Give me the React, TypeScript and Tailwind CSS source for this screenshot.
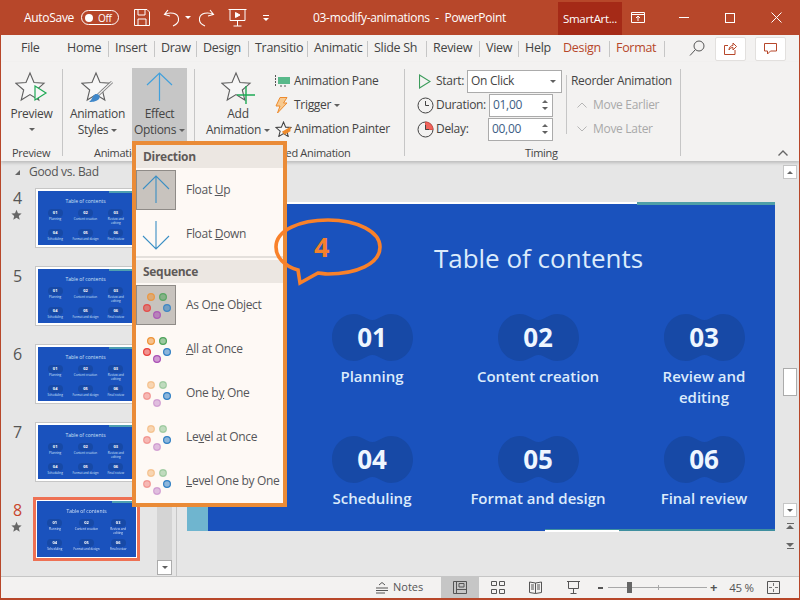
import type { ReactNode } from "react";

const tabs = [
  { label: "Home", w: "w-[48px]" },
  { label: "Insert", w: "w-[46px]" },
  { label: "Draw", w: "w-[42px]" },
  { label: "Design", w: "w-[52px]" },
  { label: "Transitio", w: "w-[59px]" },
  { label: "Animatic", w: "w-[60px]", active: true },
  { label: "Slide Sh", w: "w-[59px]" },
  { label: "Review", w: "w-[53px]" },
  { label: "View", w: "w-[39px]" },
  { label: "Help", w: "w-[38px]", plain: true },
  { label: "Design", w: "w-[53px]", red: true },
  { label: "Format", w: "w-[55px]", red: true },
];

const topics = [
  { num: "01", lines: ["Planning"] },
  { num: "02", lines: ["Content creation"] },
  { num: "03", lines: ["Review and", "editing"] },
  { num: "04", lines: ["Scheduling"] },
  { num: "05", lines: ["Format and design"] },
  { num: "06", lines: ["Final review"] },
];

const thumbs = [
  { n: 4, star: true },
  { n: 5 },
  { n: 6 },
  { n: 7 },
  { n: 8, star: true, selected: true },
];

const STAR = "M15 2 L19 11.5 L29 12.3 L21.3 19 L23.8 29 L15 23.6 L6.2 29 L8.7 19 L1 12.3 L11 11.5 Z";

function BigStar({ children }: { children?: ReactNode }) {
  return (
    <svg width="34" height="34" viewBox="0 0 34 34" fill="none">
      <path d={STAR} fill="#f7f7f7" stroke="#5f5f5f" strokeWidth="1.1" />
      {children}
    </svg>
  );
}

function Caret({ className = "" }: { className?: string }) {
  return <span className={`inline-block h-0 w-0 border-x-[3px] border-t-[3px] border-x-transparent border-t-[#606060] ${className}`} />;
}

function Blob({ className }: { className: string }) {
  return (
    <svg className={className} viewBox="0 0 81 47" fill="#1749a6">
      <path d="M22 0 C31 0 34 6 40.5 6 C47 6 50 0 59 0 C72 0 81 11 81 23.5 C81 36 72 47 59 47 C50 47 47 41 40.5 41 C34 41 31 47 22 47 C9 47 0 36 0 23.5 C0 11 9 0 22 0 Z" />
    </svg>
  );
}

function MiniSlide({ faded }: { faded?: boolean }) {
  return (
    <div className={`relative h-full w-full overflow-hidden bg-[#1a52bd] tracking-normal ${faded ? "blur-[0.3px]" : ""}`}>
      <div className="absolute right-0 top-0 h-[2px] w-[24px] bg-[#4f9fb0]" />
      <div className="pt-[7px] text-center text-[5px] leading-[7px] text-[#cfe0f5]">Table of contents</div>
      <div className="mt-[4px] grid grid-cols-3 gap-y-[4px] px-[2px]">
        {topics.map((t) => (
          <div key={t.num} className="flex h-[16px] flex-col items-center">
            <div className="flex h-[8px] w-[15px] items-center justify-center rounded-full bg-[#1749a6] text-[4px] font-bold leading-none text-white">{t.num}</div>
            <div className="text-center text-[3px] leading-[4px] text-[#d8e6f8]">
              {t.lines.map((l) => (
                <div key={l}>{l}</div>
              ))}
            </div>
          </div>
        ))}
      </div>
    </div>
  );
}

function Dots({ level }: { level: "one" | "all" | "seq" }) {
  const dots = [
    { x: 14, y: 11, c: "#ee9336" },
    { x: 26, y: 11, c: "#4ea35a" },
    { x: 10, y: 22, c: "#e8403c" },
    { x: 30, y: 22, c: "#2f7fc4", keep: true },
    { x: 20, y: 29, c: "#a94fb5" },
  ];
  return (
    <svg width="40" height="40" viewBox="0 0 40 40">
      {dots.map((d) => {
        const full = level === "all" || d.keep;
        const op = level === "one" ? 0.85 : full ? 1 : 0.4;
        return (
          <circle
            key={d.c}
            cx={d.x}
            cy={d.y}
            r="3.4"
            fill={d.c}
            fillOpacity={level === "seq" && !d.keep ? 0.35 : 0.55}
            stroke={d.c}
            strokeOpacity={op}
            strokeWidth="1.2"
          />
        );
      })}
    </svg>
  );
}

function Arrow({ down }: { down?: boolean }) {
  return (
    <svg width="38" height="38" viewBox="0 0 38 38" fill="none" stroke="#3b8fc4" strokeWidth="1.1">
      {down ? <path d="M19 6 V34 M6 21 L19 34 L32 21" /> : <path d="M19 5 V32 M6 18 L19 5 L32 18" />}
    </svg>
  );
}

function MenuItem({ icon, active, children }: { icon: ReactNode; active?: boolean; children: ReactNode }) {
  return (
    <div className="flex h-[44px] items-center">
      <div className={`h-[40px] w-[40px] shrink-0 ${active ? "border border-[#8f8b87] bg-[#c8c3be]" : "border border-transparent"}`}>{icon}</div>
      <span className="ml-[10px] whitespace-nowrap text-[12px] text-[#55565a]">{children}</span>
    </div>
  );
}

function MenuHeader({ children }: { children: ReactNode }) {
  return <div className="flex h-[23px] items-center bg-[#ece7e2] pl-[7px] text-[12px] font-bold text-[#5f5a58]">{children}</div>;
}

function EffectMenu() {
  return (
    <div className="absolute left-[131px] top-[141px] z-20 h-[366px] w-[155px] border-[4px] border-[#ea8b37] bg-[#fef9f5]">
      <MenuHeader>Direction</MenuHeader>
      <MenuItem active icon={<Arrow />}>Float <u>U</u>p</MenuItem>
      <MenuItem icon={<Arrow down />}>Float <u>D</u>own</MenuItem>
      <div className="mb-[2px] h-[2px] bg-[#e4e0dc]" />
      <MenuHeader>Sequence</MenuHeader>
      <MenuItem active icon={<Dots level="one" />}>As O<u>n</u>e Object</MenuItem>
      <MenuItem icon={<Dots level="all" />}><u>A</u>ll at Once</MenuItem>
      <MenuItem icon={<Dots level="seq" />}>One b<u>y</u> One</MenuItem>
      <MenuItem icon={<Dots level="seq" />}>Le<u>v</u>el at Once</MenuItem>
      <MenuItem icon={<Dots level="seq" />}><u>L</u>evel One by One</MenuItem>
    </div>
  );
}

function Callout() {
  return (
    <>
      <svg className="absolute left-[269px] top-[214px] z-30" width="118" height="76" viewBox="0 0 118 76" fill="none" stroke="#f9812a" strokeWidth="3.6">
        <path d="M28 56 C14 52 6 43 6 33 C6 16 30 6 58 6 C88 6 110 18 110 33 C110 50 86 60 58 60 C54 60 50 59 48 59 L30 69 Z" />
      </svg>
      <span className="absolute left-[313px] top-[229px] z-30 text-[27px] font-bold leading-[36px] text-[#f4812c]">4</span>
    </>
  );
}

function LargeButton({ icon, lines, caretInline, className = "" }: { icon: ReactNode; lines: string[]; caretInline?: boolean; className?: string }) {
  return (
    <div className={`flex flex-col items-center ${className}`}>
      <div className="flex h-[37px] items-center justify-center">{icon}</div>
      {lines.map((l, i) => (
        <div key={l} className="flex h-[16px] items-center gap-[3px] whitespace-nowrap text-[12px] leading-[16px] text-[#444]">
          {l}
          {caretInline && i === lines.length - 1 && <Caret />}
        </div>
      ))}
      {!caretInline && <Caret className="mt-[6px]" />}
    </div>
  );
}

function RibbonGroup({ w, label, labelClass, children }: { w: string; label: string; labelClass: string; children: ReactNode }) {
  return (
    <div className={`mt-[7px] h-[87px] shrink-0 border-r border-[#c6c6c6] ${w}`}>
      <div className="flex h-[78px]">{children}</div>
      <div className={`h-[12px] whitespace-nowrap text-[11px] leading-[12px] text-[#444] ${labelClass}`}>{label}</div>
    </div>
  );
}

function SmallAction({ icon, label, caret }: { icon: ReactNode; label: string; caret?: boolean }) {
  return (
    <div className="flex h-[24px] items-center">
      <div className="flex w-[19px] shrink-0 items-center">{icon}</div>
      <span className="whitespace-nowrap text-[12px] text-[#444]">{label}</span>
      {caret && <Caret className="ml-[3px]" />}
    </div>
  );
}

function SpinInput({ value, className }: { value: string; className: string }) {
  return (
    <div className={`flex h-[23px] items-center justify-between border border-[#ababab] bg-white pl-[3px] pr-[4px] ${className}`}>
      <span className="text-[12px] text-[#3d5d85]">{value}</span>
      <span className="flex flex-col gap-[4px]">
        <span className="h-0 w-0 border-x-[3px] border-b-[3px] border-x-transparent border-b-[#666]" />
        <Caret />
      </span>
    </div>
  );
}

function Clock({ slice }: { slice?: boolean }) {
  return (
    <svg width="17" height="17" viewBox="0 0 17 17" fill="none" stroke="#444" strokeWidth="1">
      <circle cx="8.5" cy="8.5" r="7.5" />
      {slice && <path d="M8.5 1 A7.5 7.5 0 0 1 16 8.5 H8.5 Z" fill="#f1635b" stroke="#d9534b" />}
      <path d="M8.5 4 V8.5 H12" />
    </svg>
  );
}

function TitleBar() {
  return (
    <div className="flex h-[35px] items-center bg-[#b7472a] text-white">
      <span className="ml-[23px] w-[57px] text-[12px]">AutoSave</span>
      <div className="flex h-[15px] w-[38px] items-center rounded-full border border-white pl-[3px]">
        <span className="h-[8px] w-[8px] rounded-full bg-white" />
        <span className="ml-[5px] text-[10px] leading-none">Off</span>
      </div>
      <svg className="ml-[15px]" width="16" height="17" viewBox="0 0 16 17" fill="none" stroke="white">
        <path d="M.5 .5 H13 L15.5 3 V16.5 H.5 Z M4 .5 V6 H11 V.5 M4 16.5 V10 H12 V16.5" />
      </svg>
      <svg className="ml-[13px]" width="18" height="18" viewBox="0 0 18 18" fill="none" stroke="white" strokeWidth="1.1">
        <path d="M5 1 L1.5 5.5 L7 7 M1.5 5.5 C7 2.5 15 4 15.5 9.5 C16 13 13.5 15.5 10 17" />
      </svg>
      <span className="ml-[4px] h-0 w-0 border-x-[3px] border-t-[3px] border-x-transparent border-t-white" />
      <svg className="ml-[8px]" width="16" height="18" viewBox="0 0 16 18" fill="none" stroke="white" strokeWidth="1.1">
        <path d="M11 1 L14.5 5.5 L9 7 M14.5 5.5 C9 2.5 1 4 .5 9.5 C0 13 2.5 15.5 6 17" />
      </svg>
      <svg className="ml-[13px]" width="19" height="19" viewBox="0 0 19 19" fill="none" stroke="white">
        <path d="M.5 1.5 H18.5 M2 1.5 V12.5 H17 V1.5 M9.5 12.5 V18 M5.5 18 H13.5" />
        <path d="M7.5 4.5 L12 7 L7.5 9.5 Z" fill="white" />
      </svg>
      <div className="ml-[16px] flex flex-col items-center gap-[2px]">
        <span className="h-px w-[6px] bg-white" />
        <span className="h-0 w-0 border-x-[3px] border-t-[3px] border-x-transparent border-t-white" />
      </div>
      <span className="ml-[44px] w-[245px] whitespace-pre text-[12px]">03-modify-animations  -  PowerPoint</span>
      <div className="flex h-[33px] w-[64px] items-center justify-center self-end bg-[#a52a17] text-[11.5px]">SmartArt...</div>
      <svg className="ml-[9px]" width="14" height="11" viewBox="0 0 14 11" fill="none" stroke="white">
        <path d="M.5 .5 H13.5 V10.5 H.5 Z M.5 2.5 H13.5 M7 9 V4 M5 6 L7 4 L9 6" />
      </svg>
      <span className="ml-[34px] h-px w-[10px] bg-white" />
      <span className="ml-[36px] h-[10px] w-[10px] border border-white" />
      <svg className="ml-[36px]" width="11" height="11" viewBox="0 0 11 11" stroke="white">
        <path d="M.5 .5 L10.5 10.5 M10.5 .5 L.5 10.5" />
      </svg>
    </div>
  );
}

function TabRow() {
  return (
    <div className="flex h-[27px] items-center bg-[#f3f2f1] text-[12.5px] text-[#444]">
      <span className="ml-[20px] w-[40px]">File</span>
      {tabs.map((t) => (
        <div key={t.label + t.w} className={`relative flex h-[16px] items-center pl-[6px] ${t.w} ${t.plain ? "" : "border-r border-[#c6c6c6]"}`}>
          <span className={`whitespace-nowrap ${t.active ? "font-medium" : ""} ${t.red ? "text-[#b7472a]" : ""}`}>{t.label}</span>
          {t.active && <span className="absolute left-[5px] top-[21px] h-[2px] w-[50px] bg-[#b7472a]" />}
        </div>
      ))}
      <svg className="ml-[24px]" width="16" height="17" viewBox="0 0 16 17" fill="none" stroke="#555">
        <circle cx="10" cy="6" r="5" />
        <path d="M6.5 9.5 L1 15.5" />
      </svg>
      <div className="ml-[10px] flex h-[24px] w-[31px] items-center justify-center rounded-[2px] border border-[#e2e0de] bg-white">
        <svg width="13" height="13" viewBox="0 0 13 13" fill="none" stroke="#b7472a">
          <path d="M4 3.5 H.5 V12.5 H11 V8 M5 8 C5 5 7 3.5 9 3.5 V1 L12.5 4.5 L9 8 V5.5 C7.5 5.5 6 6 5 8 Z" />
        </svg>
      </div>
      <div className="ml-[9px] flex h-[24px] w-[31px] items-center justify-center rounded-[2px] border border-[#e2e0de] bg-white">
        <svg width="13" height="12" viewBox="0 0 13 12" fill="none" stroke="#b7472a">
          <path d="M.5 .5 H12.5 V8 H6.5 L3.5 11 V8 H.5 Z" />
        </svg>
      </div>
    </div>
  );
}

function Ribbon() {
  return (
    <div className="relative z-10 flex h-[99px] bg-[#f3f2f1] shadow-[0_2px_3px_rgba(0,0,0,0.18)]">
      <RibbonGroup w="w-[62px]" label="Preview" labelClass="pl-[11px]">
        <LargeButton
          className="w-[61px]"
          lines={["Preview"]}
          icon={
            <BigStar>
              <path d="M20 15 L31 22 L20 29 Z" fill="#f7f7f7" stroke="#1eaa55" strokeWidth="1.2" />
            </BigStar>
          }
        />
      </RibbonGroup>
      <RibbonGroup w="w-[132px]" label="Animation" labelClass="pl-[31px]">
        <LargeButton
          className="w-[69px]"
          lines={["Animation", "Styles"]}
          caretInline
          icon={
            <BigStar>
              <path d="M31 11 L17 24" stroke="#777" strokeWidth="3" />
              <path d="M31 11 L17 24" stroke="#eee" strokeWidth="1.4" />
              <path d="M13 24 C17 21 20 25 18 28 C15 31 10 31 8 31 C11 29 11 26 13 24 Z" fill="#3f87c9" />
            </BigStar>
          }
        />
        <div className="-mt-px flex h-[73px] w-[55px] flex-col items-center bg-[#c6c6c6]">
          <div className="flex h-[38px] items-center">
            <svg width="27" height="30" viewBox="0 0 27 30" fill="none" stroke="#41a0dc" strokeWidth="1.2">
              <path d="M13.5 1 V29 M1 13 L13.5 1 L26 13" />
            </svg>
          </div>
          <div className="h-[16px] text-[12px] leading-[16px] text-[#444]">Effect</div>
          <div className="flex h-[16px] items-center gap-[3px] whitespace-nowrap text-[12px] leading-[16px] text-[#444]">
            Options
            <Caret />
          </div>
        </div>
      </RibbonGroup>
      <RibbonGroup w="w-[210px]" label="Advanced Animation" labelClass="pl-[55px]">
        <LargeButton
          className="ml-[4px] w-[78px]"
          lines={["Add", "Animation"]}
          caretInline
          icon={
            <BigStar>
              <path d="M25 15 V33 M16 24 H34" stroke="#1eaa55" strokeWidth="1.4" />
            </BigStar>
          }
        />
        <div className="-mt-px ml-[-2px] flex flex-col pt-[1px]">
          <SmallAction
            label="Animation Pane"
            icon={
              <svg width="16" height="12" viewBox="0 0 16 12" fill="none">
                <path d="M.5 0 V12" stroke="#555" strokeDasharray="2 1" />
                <path d="M3 2 H15 V9 H3 Z" fill="#58b98a" />
                <path d="M5 11 H13" stroke="#555" strokeDasharray="2 2" />
              </svg>
            }
          />
          <SmallAction
            label="Trigger"
            caret
            icon={
              <svg width="13" height="17" viewBox="0 0 13 17" fill="#f7c98f" stroke="#ed8a2c">
                <path d="M5 .5 H12 L8.5 6 H12 L2.5 16 L5 9 H1 Z" />
              </svg>
            }
          />
          <SmallAction
            label="Animation Painter"
            icon={
              <svg width="17" height="16" viewBox="0 0 30 30" fill="none">
                <path d={STAR} fill="#f7f7f7" stroke="#444" strokeWidth="2" />
                <path d="M12 20 L28 11 L28 19 L17 26 Z" fill="#ed8a2c" />
              </svg>
            }
          />
        </div>
      </RibbonGroup>
      <RibbonGroup w="w-[276px]" label="Timing" labelClass="pl-[120px]">
        <div className="ml-[12px] flex w-[148px] flex-col">
          <div className="flex h-[24px] items-center">
            <svg className="ml-[2px] mr-[5px]" width="12" height="15" viewBox="0 0 12 15" fill="none" stroke="#3d9c5c" strokeWidth="1.1">
              <path d="M.5 1 L11 7.5 L.5 14 Z" />
            </svg>
            <span className="w-[31px] text-[12px] text-[#444]">Start:</span>
            <div className="flex h-[23px] w-[95px] items-center justify-between border border-[#ababab] bg-white pl-[3px] pr-[5px] text-[12px] text-[#444]">
              On Click
              <Caret />
            </div>
          </div>
          <div className="flex h-[24px] items-center">
            <span className="mr-[2px] flex"><Clock /></span>
            <span className="w-[53px] text-[12px] text-[#444]">Duration:</span>
            <SpinInput value="01,00" className="w-[64px]" />
          </div>
          <div className="flex h-[24px] items-center">
            <span className="mr-[2px] flex"><Clock slice /></span>
            <span className="w-[52px] text-[12px] text-[#444]">Delay:</span>
            <SpinInput value="00,00" className="w-[65px]" />
          </div>
        </div>
        <div className="my-[6px] ml-[1px] h-[59px] border-l border-[#c6c6c6]" />
        <div className="ml-[4px] flex flex-col text-[12px]">
          <div className="flex h-[24px] items-center whitespace-nowrap text-[#444]">Reorder Animation</div>
          <div className="flex h-[24px] items-center text-[#a9a9a9]">
            <svg className="ml-[6px] mr-[6px]" width="10" height="6" viewBox="0 0 10 6" fill="none" stroke="#b5b5b5">
              <path d="M.5 5.5 L5 1 L9.5 5.5" />
            </svg>
            <span className="whitespace-nowrap">Move Earlier</span>
          </div>
          <div className="flex h-[24px] items-center text-[#a9a9a9]">
            <svg className="ml-[6px] mr-[6px]" width="10" height="6" viewBox="0 0 10 6" fill="none" stroke="#b5b5b5">
              <path d="M.5 .5 L5 5 L9.5 .5" />
            </svg>
            <span className="whitespace-nowrap">Move Later</span>
          </div>
        </div>
      </RibbonGroup>
      <svg className="ml-auto mr-[11px] mt-[88px]" width="10" height="6" viewBox="0 0 10 6" fill="none" stroke="#666" strokeWidth="1.4">
        <path d="M.5 5.5 L5 1 L9.5 5.5" />
      </svg>
    </div>
  );
}

function ThumbPanel() {
  return (
    <div className="flex w-[176px] shrink-0 border-r border-[#c6c6c6]">
      <div className="w-[156px] pt-[2px]">
        <div className="flex h-[18px] items-center text-[12px] text-[#555]">
          <span className="ml-[14px] mr-[9px] h-0 w-0 border-b-[5px] border-l-[5px] border-b-[#666] border-l-transparent" />
          Good vs. Bad
        </div>
        <div className="mt-[7px] flex flex-col gap-[18px]">
          {thumbs.map((t) => (
            <div key={t.n} className="flex h-[60px]">
              <div className="w-[34px] shrink-0 pl-[12px]">
                <div className={`text-[16px] leading-[20px] ${t.selected ? "text-[#c8452c]" : "text-[#555]"}`}>{t.n}</div>
                {t.star && (
                  <svg className="-ml-[2px] mt-[1px]" width="11" height="11" viewBox="0 0 30 30" fill="#666">
                    <path d={STAR} />
                  </svg>
                )}
              </div>
              <div
                className={
                  t.selected
                    ? "-ml-[2px] -mt-[3px] h-[64px] w-[107px] shrink-0 border-[3px] border-[#ee7154] bg-white p-[1px]"
                    : "h-[60px] w-[101px] shrink-0 border border-[#c6c6c6] bg-white p-[2px]"
                }
              >
                <MiniSlide faded={t.selected} />
              </div>
            </div>
          ))}
        </div>
      </div>
      <div className="mb-[1px] flex w-[15px] flex-col justify-end bg-[#d4d4d4]">
        <div className="flex h-[15px] items-center justify-center border border-[#ababab] bg-white">
          <Caret />
        </div>
      </div>
    </div>
  );
}

function MainSlide() {
  return (
    <div className="relative ml-[10px] mt-[43px] h-[327px] w-[588px] shrink-0 bg-[#1a52bd] pl-[115px] tracking-normal text-[#dcebfb]">
      <div className="absolute left-[99px] right-0 -top-[2px] h-[2px] bg-white" />
      <div className="absolute right-0 -top-[2px] h-[3px] w-[138px] bg-[#4f9fa8]" />
      <div className="absolute bottom-0 left-0 h-[26px] w-[21px] bg-[#6fb5cf]" />
      <div className="absolute bottom-0 right-0 h-[2px] w-[230px] bg-[#3f8f9f]" />
      <div className="absolute -bottom-[1px] left-[358px] h-[2px] w-[74px] bg-white" />
      <div className="pt-[34px] text-center text-[26px] leading-[40px]">Table of contents</div>
      <div className="mt-[36px] grid grid-cols-[140px_140px_140px] gap-x-[26px]">
        {topics.map((t) => (
          <div key={t.num} className="flex h-[122px] flex-col items-center text-center">
            <div className="relative h-[47px] w-[81px]">
              <Blob className="h-[47px] w-[81px]" />
              <span className="absolute inset-0 flex items-center justify-center text-[26px] font-bold text-[#eef6ff]">{t.num}</span>
            </div>
            <div className="mt-[5px] text-[15px] font-semibold leading-[21px]">
              {t.lines.map((l) => (
                <div key={l} className="whitespace-nowrap">{l}</div>
              ))}
            </div>
          </div>
        ))}
      </div>
    </div>
  );
}

function SideScroll() {
  return (
    <div className="ml-[8px] flex w-[14px] flex-col items-center bg-[#e6e6e6] pt-[4px]">
      <div className="flex h-[14px] w-[14px] items-center justify-center border border-[#c6c6c6] bg-white">
        <span className="h-0 w-0 border-x-[3px] border-b-[3px] border-x-transparent border-b-[#666]" />
      </div>
      <div className="mt-[189px] h-[28px] w-[14px] border border-[#ababab] bg-white" />
      <div className="mt-[107px] flex h-[14px] w-[14px] items-center justify-center border border-[#c6c6c6] bg-white">
        <Caret />
      </div>
      <div className="mt-[6px] flex h-[10px] flex-col items-center gap-[1px]">
        <span className="h-px w-[7px] bg-[#666]" />
        <span className="h-0 w-0 border-x-[4px] border-b-[4px] border-x-transparent border-b-[#666]" />
      </div>
      <div className="mt-[10px] flex h-[10px] flex-col items-center gap-[1px]">
        <span className="h-0 w-0 border-x-[4px] border-t-[4px] border-x-transparent border-t-[#666]" />
        <span className="h-px w-[7px] bg-[#666]" />
      </div>
    </div>
  );
}

function StatusBar() {
  return (
    <div className="flex h-[22px] items-center border-t border-[#c6c6c6] bg-[#f3f2f1] text-[11px] text-[#555]">
      <svg className="ml-[375px]" width="12" height="12" viewBox="0 0 12 12" stroke="#555" fill="none">
        <path d="M3 3 L6 .5 L9 3 M0 6 H12 M0 8.5 H12 M0 11 H9" />
      </svg>
      <span className="ml-[5px] w-[46px] tracking-normal">Notes</span>
      <div className="ml-[2px] flex h-full w-[38px] items-center justify-center bg-[#c6c6c6]">
        <svg width="14" height="13" viewBox="0 0 14 13" fill="none" stroke="#555">
          <path d="M.5 .5 H13.5 V12.5 H.5 Z M3.5 .5 V12.5 M3.5 8.5 H13.5 M6 2.5 H11 V6 H6 Z" />
        </svg>
      </div>
      <svg className="ml-[12px]" width="14" height="13" viewBox="0 0 14 13" fill="none" stroke="#555">
        <path d="M.5 .5 H5.5 V4.5 H.5 Z M8.5 .5 H13.5 V4.5 H8.5 Z M.5 8.5 H5.5 V12.5 H.5 Z M8.5 8.5 H13.5 V12.5 H8.5 Z" />
      </svg>
      <svg className="ml-[24px]" width="13" height="13" viewBox="0 0 13 13" fill="none" stroke="#555">
        <path d="M.5 1 L6.5 2 L12.5 1 V11.5 L6.5 12.5 L.5 11.5 Z M6.5 2 V12.5 M2 4 H5 M2 6 H5 M2 8 H5 M8 4 H11 M8 6 H11 M8 8 H11" />
      </svg>
      <svg className="ml-[25px]" width="13" height="13" viewBox="0 0 13 13" fill="none" stroke="#555">
        <path d="M0 .5 H13 M1.5 .5 V7.5 H11.5 V.5 M6.5 7.5 V12.5 M3.5 12.5 H9.5" />
      </svg>
      <span className="ml-[18px] h-[2px] w-[5px] bg-[#555]" />
      <div className="relative ml-[5px] h-px w-[99px] bg-[#a8a8a8]">
        <span className="absolute left-[19px] -top-[5px] h-[11px] w-[5px] bg-[#666]" />
        <span className="absolute left-[50px] -top-[2px] h-[5px] w-px bg-[#a8a8a8]" />
      </div>
      <span className="ml-[3px] text-[13px] font-bold leading-none">+</span>
      <span className="ml-[12px] w-[38px] text-[11.5px]">45 %</span>
      <svg width="13" height="13" viewBox="0 0 13 13" fill="none" stroke="#555">
        <path d="M.5 .5 H12.5 V12.5 H.5 Z" />
        <path d="M6.5 2 V5 M6.5 8 V11 M2 6.5 H5 M8 6.5 H11" strokeWidth="0.8" />
      </svg>
    </div>
  );
}

export default function App() {
  return (
    <div className="relative flex h-[600px] w-[800px] flex-col overflow-hidden border-x border-b-2 border-[#b7472a] bg-[#e6e6e6] font-['Open_Sans','Liberation_Sans',sans-serif] tracking-[-0.3px]">
      <TitleBar />
      <TabRow />
      <Ribbon />
      <div className="flex h-[415px]">
        <ThumbPanel />
        <MainSlide />
        <SideScroll />
      </div>
      <StatusBar />
      <EffectMenu />
      <Callout />
    </div>
  );
}
